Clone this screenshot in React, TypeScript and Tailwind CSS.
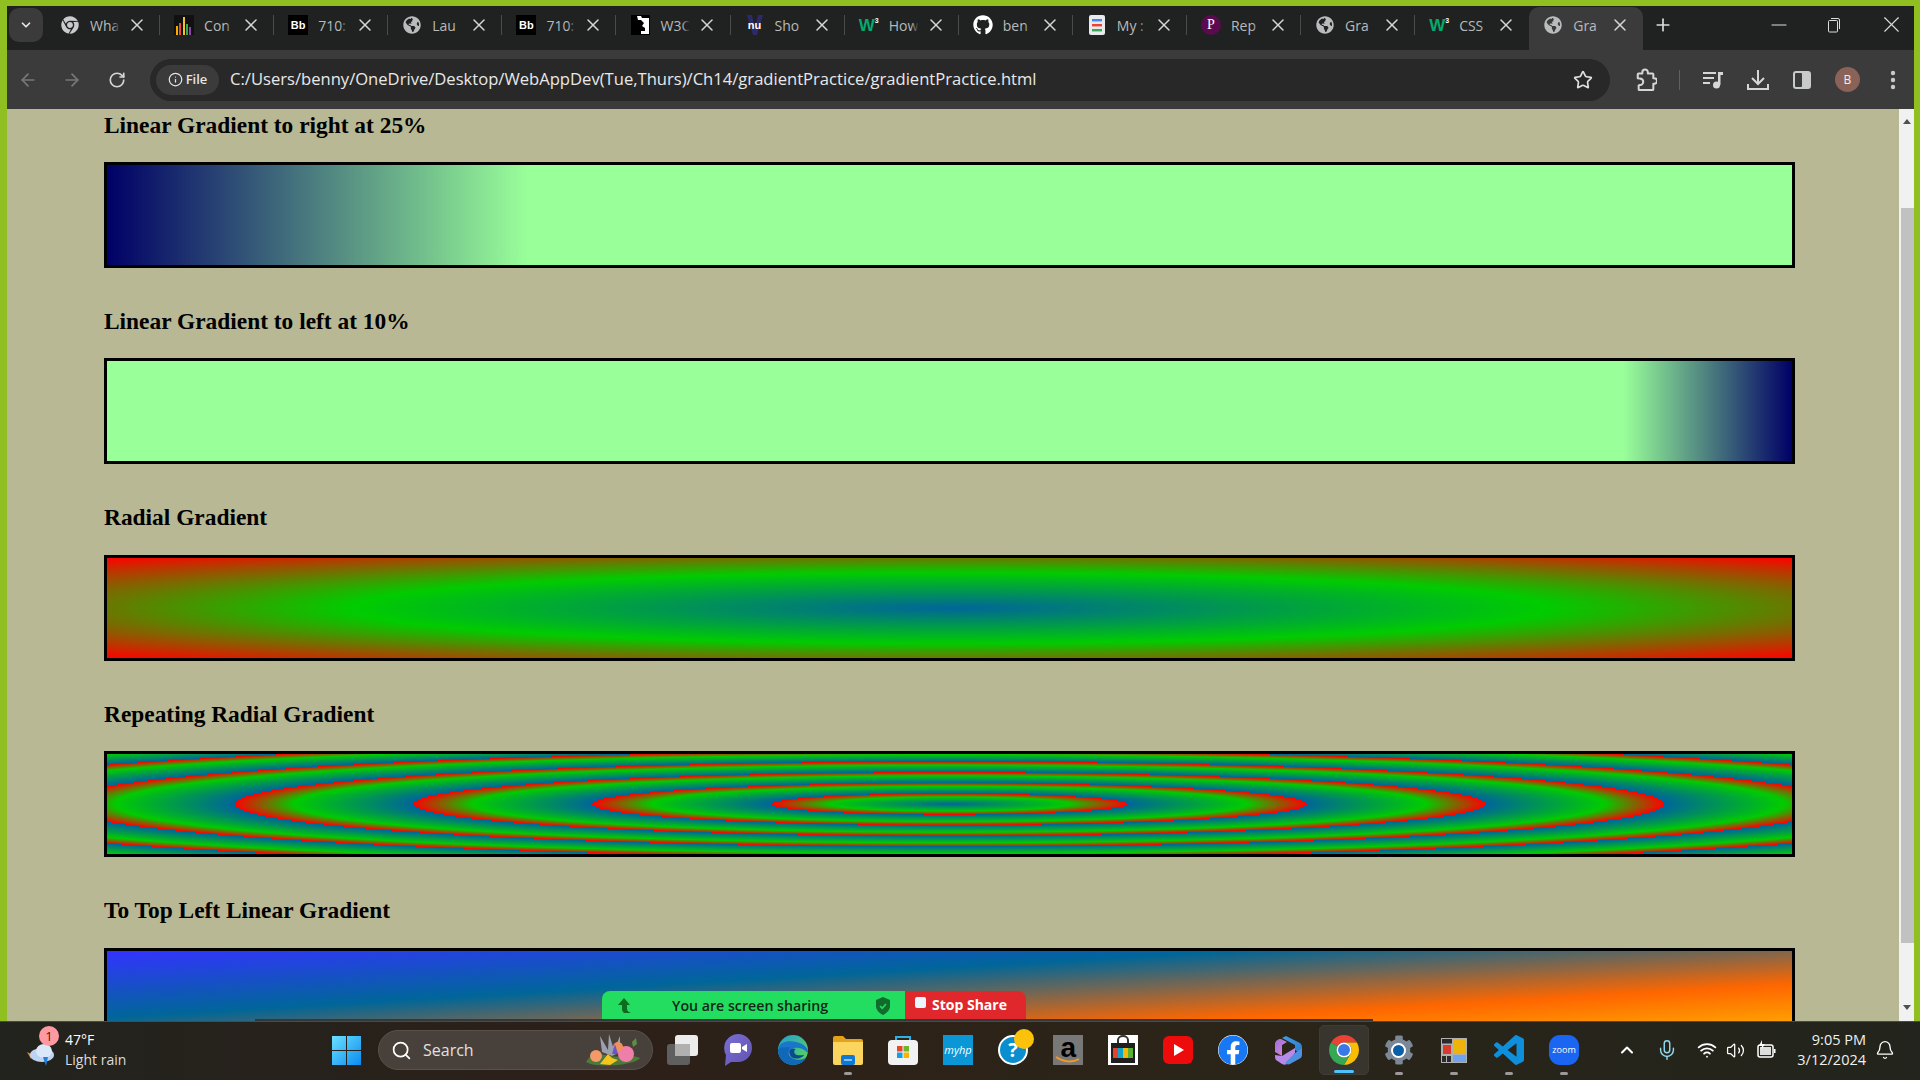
import React from 'react';
import { ArrowLeft, ArrowRight, RotateCw, Star, Plus, X, Minus, ChevronDown, ChevronUp, Search, Mic, Wifi, Volume2, Bell, Info } from 'lucide-react';
import { FaGlobeAmericas, FaGithub, FaFacebook, FaCog, FaChrome } from 'react-icons/fa';

const ChromeLogo = ({ size = 36 }: { size?: number }) => (
    <svg width={size} height={size} viewBox="4 4 40 40">
        <path fill="#ea4335" d="M24 4a20 20 0 0 1 17.32 10H24a10 10 0 0 0-8.66 5L6.68 14A20 20 0 0 1 24 4z" />
        <path fill="#fbbc04" d="M41.32 14A20 20 0 0 1 24 44l8.66-15A10 10 0 0 0 24 14z" />
        <path fill="#34a853" d="M6.68 14A20 20 0 0 0 24 44l8.66-15a10 10 0 0 1-17.32-10z" />
        <circle cx="24" cy="24" r="10" fill="#fff" />
        <circle cx="24" cy="24" r="8" fill="#3b78e7" />
    </svg>
);

const Globe = () => <FaGlobeAmericas className="text-[#b9bcbd] text-[18px]" />;

function BbIcon() {
    return (
        <span className="flex h-5 w-5 items-center justify-center bg-black text-[11px] font-bold leading-none text-white font-['Liberation_Sans',sans-serif]">Bb</span>
    );
}

function W3Icon() {
    return (
        <span className="flex w-5 items-start justify-center text-[17px] font-bold leading-none text-[#04aa6d] font-['Liberation_Sans',sans-serif]">
            W<span className="text-[7px] leading-none text-white">3</span>
        </span>
    );
}

const tabs: { label: string; icon: React.ReactNode }[] = [
    { label: 'Wha', icon: <FaChrome className="text-[#c9cbcc] text-[18px]" /> },
    {
        label: 'Con',
        icon: (
            <svg width="20" height="20" viewBox="0 0 20 20">
                <rect width="20" height="20" fill="#111" />
                <rect x="2" y="11" width="2" height="9" fill="#f9ab00" />
                <rect x="5" y="8" width="2" height="12" fill="#e8453c" />
                <rect x="9" y="2" width="2" height="18" fill="#f6c026" />
                <rect x="12" y="9" width="2" height="11" fill="#34a853" />
                <rect x="15" y="12" width="2" height="8" fill="#8e44ad" />
            </svg>
        ),
    },
    { label: '710:', icon: <BbIcon /> },
    { label: 'Lau', icon: <Globe /> },
    { label: '710:', icon: <BbIcon /> },
    {
        label: 'W3C',
        icon: (
            <svg width="19" height="20" viewBox="0 0 19 20">
                <rect width="19" height="20" fill="#000" />
                <path d="M6 1h4l1 2h7v16h-8v-3h4v-3l-3-2 2-3-3-3H7z" fill="#fff" />
            </svg>
        ),
    },
    {
        label: 'Sho',
        icon: (
            <span className="relative flex h-5 w-5 items-center justify-center">
                <svg width="20" height="20" viewBox="0 0 20 20" className="absolute inset-0">
                    <path d="M2 0h5l3 14 3-14h5l-6 20h-4z" fill="#2c2a6b" />
                </svg>
                <span className="relative text-[11px] font-bold leading-none text-white font-['Liberation_Sans',sans-serif]">nu</span>
            </span>
        ),
    },
    { label: 'How', icon: <W3Icon /> },
    { label: 'ben', icon: <FaGithub className="text-white text-[20px]" /> },
    {
        label: 'My :',
        icon: (
            <svg width="16" height="20" viewBox="0 0 16 20">
                <rect width="16" height="20" rx="2" fill="#e8eaed" />
                <rect x="3" y="4" width="10" height="2.4" fill="#4285f4" />
                <rect x="3" y="9" width="10" height="2.4" fill="#ea4335" />
                <rect x="3" y="14" width="10" height="2.4" fill="#34a853" />
            </svg>
        ),
    },
    {
        label: 'Rep',
        icon: (
            <span className="flex h-5 w-5 items-center justify-center rounded-full bg-[#5b0a4f] text-[14px] leading-none text-white font-['Liberation_Serif',serif]">P</span>
        ),
    },
    { label: 'Gra', icon: <Globe /> },
    { label: 'CSS', icon: <W3Icon /> },
    { label: 'Gra', icon: <Globe /> },
];

const Tab = ({ label, icon, active, last }: { label: string; icon: React.ReactNode; active: boolean; last: boolean }) => (
    <div className={`relative flex h-[43px] w-[114.1px] shrink-0 items-center pb-[7px] pl-[14px] ${active ? 'rounded-t-[10px] bg-[#3b3b3b]' : ''}`}>
        <span className="flex w-5 shrink-0 items-center justify-center">{icon}</span>
        <span className="relative ml-[10px] w-[30px] overflow-hidden whitespace-nowrap text-[14px] text-[#b8baba]">
            {label}
            <span className={`absolute inset-y-0 right-0 w-2 ${active ? 'bg-gradient-to-r from-transparent to-[#3b3b3b]' : 'bg-gradient-to-r from-transparent to-[#202221]'}`} />
        </span>
        <X size={20} strokeWidth={1.8} className="ml-[7px] shrink-0 text-[#d5d6d6]" />
        {!active && !last && <span className="absolute right-0 top-[8px] h-[20px] w-px bg-[#4a4c4c]" />}
    </div>
);

const headingClass = "mb-[24.5px] text-[23.4px] font-bold leading-[25px] text-black font-['Liberation_Serif',serif]";
const boxClass = 'mb-[40.9px] h-[106px] w-full shrink-0 border-[3px] border-black';

const sections = [
    { title: 'Linear Gradient to right at 25%', bg: 'bg-[linear-gradient(to_right,#000066,#99ff99_25%)]' },
    { title: 'Linear Gradient to left at 10%', bg: 'bg-[linear-gradient(to_left,#000066,#99ff99_10%)]' },
    { title: 'Radial Gradient', bg: 'bg-[radial-gradient(#006699,#00cc00,#ff0000)]' },
    { title: 'Repeating Radial Gradient', bg: 'bg-[repeating-radial-gradient(#006699,#00cc00_10%,#ff0000_15%)]' },
    { title: 'To Top Left Linear Gradient', bg: 'bg-[linear-gradient(to_top_left,#ffcc00,#ff6600,#006699,#3333ff)]' },
];

const Slot = ({ children, dot, active }: { children: React.ReactNode; dot?: boolean; active?: boolean }) => (
    <div className={`relative mx-[2.55px] flex h-[50px] w-[50px] items-center justify-center rounded-[5px] ${active ? 'border border-[#3f3b35] bg-[#38352f]' : ''}`}>
        {children}
        {active && <span className="absolute bottom-[1px] h-[3px] w-5 rounded-full bg-[#4cc2ff]" />}
        {dot && <span className="absolute bottom-0 h-[3px] w-2 rounded-full bg-[#9a9a98]" />}
    </div>
);

export default function App() {
    return (
        <div className="relative flex h-screen w-screen flex-col overflow-hidden bg-[#8fbf21] font-['Open_Sans',sans-serif]">
            <div className="flex h-[1021px] shrink-0 flex-col pl-[7px] pr-[6px] pt-[6px]">
                {/* tab strip */}
                <div className="flex h-[44px] shrink-0 items-end bg-[#202221]">
                    <div className="mb-[8px] ml-[2px] mr-[3px] flex h-[34px] w-[34px] shrink-0 items-center justify-center rounded-[10px] bg-[#3b3b3b]">
                        <ChevronDown size={14} strokeWidth={3} className="text-[#e5e5e5]" />
                    </div>
                    {tabs.map((t, i) => (
                        <Tab key={i} label={t.label} icon={t.icon} active={i === tabs.length - 1} last={i === tabs.length - 2} />
                    ))}
                    <div className="mb-[15px] ml-[10px] flex h-5 w-5 items-center justify-center">
                        <Plus size={20} strokeWidth={2} className="text-[#dcdcdc]" />
                    </div>
                    <div className="mb-[12px] ml-auto flex items-center pr-[9.5px] text-[#dcdcdc]">
                        <Minus size={24} strokeWidth={1.2} />
                        <svg width="14" height="16" viewBox="0 0 14 16" className="ml-[36px]" fill="none" stroke="currentColor">
                            <rect x="1.5" y="3.5" width="9" height="11.5" rx="1" />
                            <path d="M4 1.5h7a1.5 1.5 0 0 1 1.5 1.5v9" />
                        </svg>
                        <X size={27} strokeWidth={1} className="ml-[36.5px]" />
                    </div>
                </div>
                {/* toolbar */}
                <div className="flex h-[59px] shrink-0 items-center bg-[#3b3b3b]">
                    <ArrowLeft size={20} strokeWidth={2} className="ml-[11px] text-[#77797a]" />
                    <ArrowRight size={20} strokeWidth={2} className="ml-[24px] text-[#77797a]" />
                    <RotateCw size={18} strokeWidth={2.2} className="ml-[26px] text-[#d5d6d6]" />
                    <div className="ml-[24px] flex h-[42px] w-[1460px] shrink-0 items-center rounded-full bg-[#282828] pl-[6px]">
                        <div className="flex h-[30px] w-[63px] items-center justify-center gap-[3px] rounded-full bg-[#3b3b3b] text-[13px] font-semibold text-[#e5e5e5]">
                            <Info size={15} strokeWidth={2} />
                            File
                        </div>
                        <span className="ml-[11px] whitespace-nowrap text-[16.6px] text-[#e8e8e8]">C:/Users/benny/OneDrive/Desktop/WebAppDev(Tue,Thurs)/Ch14/gradientPractice/gradientPractice.html</span>
                        <Star size={20} strokeWidth={2} className="ml-auto mr-[17px] text-[#e0e0e0]" />
                    </div>
                    <svg width="22" height="24" viewBox="0 0 24 26" fill="none" stroke="#d5d6d6" strokeWidth="2.2" strokeLinejoin="round" className="ml-[25px] shrink-0">
                        <path d="M8 6V4.5a3 3 0 0 1 6 0V6h5a1 1 0 0 1 1 1v4h1a3 3 0 0 1 0 6h-1v6a1 1 0 0 1-1 1H5a1 1 0 0 1-1-1v-4l1.5-.5a3.5 3.5 0 0 0 0-7L3 11V7a1 1 0 0 1 1-1z" />
                    </svg>
                    <span className="ml-[22px] h-[20px] w-px shrink-0 bg-[#5f5f5f]" />
                    <svg width="20" height="18" viewBox="0 0 20 18" className="ml-[23px] shrink-0" fill="#d5d6d6">
                        <rect x="0" y="1" width="13" height="2" />
                        <rect x="0" y="6" width="11" height="2" />
                        <rect x="0" y="11" width="7" height="2" />
                        <path d="M15 1h5v3h-2.5v10h-2.5z" />
                        <circle cx="13.5" cy="14" r="3.5" />
                    </svg>
                    <svg width="22" height="22" viewBox="0 0 22 22" className="ml-[24px] shrink-0" fill="none" stroke="#d5d6d6" strokeWidth="2">
                        <path d="M11 1v13 M5 9l6 6 6-6 M1 15v5h20v-5" />
                    </svg>
                    <svg width="18" height="18" viewBox="0 0 18 18" className="ml-[24px] shrink-0">
                        <rect width="18" height="18" rx="3" fill="#c9caca" />
                        <rect x="2" y="2" width="7" height="14" rx="1" fill="#3b3b3b" />
                    </svg>
                    <span className="ml-[24px] flex h-[25px] w-[25px] shrink-0 items-center justify-center rounded-full bg-[#8a6358] text-[12px] text-[#eee]">B</span>
                    <svg width="6" height="20" viewBox="0 0 6 20" className="ml-[30px] shrink-0" fill="#c9caca">
                        <circle cx="3" cy="3" r="2.2" />
                        <circle cx="3" cy="10" r="2.2" />
                        <circle cx="3" cy="17" r="2.2" />
                    </svg>
                </div>
                {/* page */}
                <div className="flex min-h-0 flex-1">
                    <div className="min-w-0 flex-1 overflow-hidden bg-[#b8b894] pl-[97px] pr-[104px] pt-[3.5px]">
                        {sections.map((s) => (
                            <div key={s.title}>
                                <h3 className={headingClass}>{s.title}</h3>
                                <div className={`${boxClass} ${s.bg}`} />
                            </div>
                        ))}
                    </div>
                    <div className="flex w-[15px] shrink-0 flex-col bg-[#f1f1f1] pt-[10px]">
                        <span className="mx-auto h-0 w-0 border-x-[4px] border-b-[5px] border-x-transparent border-b-[#505050]" />
                        <span className="ml-[2px] mt-[84px] h-[735px] w-[13px] bg-[#c1c1c1]" />
                        <span className="mx-auto mt-[62px] h-0 w-0 border-x-[4px] border-t-[5px] border-x-transparent border-t-[#505050]" />
                    </div>
                </div>
            </div>

            {/* zoom share bar */}
            <div className="absolute left-[602px] top-[991px] flex h-[30px] items-stretch">
                <div className="flex w-[303px] items-center rounded-tl-[8px] bg-[#22dd5f] pb-[1px] pl-[16px] text-[14.2px] font-semibold text-[#12261a]">
                    <svg width="14" height="16" viewBox="0 0 14 16">
                        <path fill="#0c6b1f" d="M6 0l6 7H9v4c0 2 2 3 4 4H6c-1-1-2-2-2-4V7H0z" />
                    </svg>
                    <span className="ml-[40px] w-[158px] whitespace-nowrap">You are screen sharing</span>
                    <svg width="14" height="18" viewBox="0 0 14 18" className="ml-[46px]">
                        <path fill="#116b2c" d="M7 0l7 3v6c0 4-3 7-7 9-4-2-7-5-7-9V3z" />
                        <path d="M4 9l2.2 2.3L10 7" fill="none" stroke="#22dd5f" strokeWidth="1.6" />
                    </svg>
                </div>
                <div className="flex w-[121px] items-start rounded-tr-[8px] bg-[#e0282c] pl-[10px] text-[14px] font-bold text-white">
                    <span className="mt-[6px] h-[11px] w-[11px] rounded-[2px] bg-[#eaf6fb]" />
                    <span className="ml-[6px] mt-[4px] whitespace-nowrap leading-[20px]">Stop Share</span>
                </div>
            </div>
            <span className="absolute left-[255px] top-[1019px] h-[2px] w-[1118px] bg-[#33393a]" />

            {/* taskbar */}
            <div className="flex h-[59px] shrink-0 items-center border-t border-[#4a4a48] bg-[linear-gradient(to_right,#22231e,#2c2019_30%,#2c2418_60%,#22241d)] pb-[2px] text-white">
                <div className="relative ml-[27px] flex w-[305px] shrink-0 items-center">
                    <svg width="30" height="28" viewBox="0 0 30 28" className="mt-[6px]">
                        <path d="M0 13l6 3-2 4z" fill="#f08c1e" />
                        <ellipse cx="15" cy="16" rx="12" ry="7" fill="#bcd4f2" />
                        <ellipse cx="17" cy="12" rx="8" ry="7" fill="#dbe8f8" />
                        <path d="M16 18h5l-2 9z" fill="#1e7fe0" />
                    </svg>
                    <span className="absolute left-[12px] top-[-4px] flex h-5 w-5 items-center justify-center rounded-full bg-[#ff9aa2] text-[13px] leading-none text-[#3a1a1a]">1</span>
                    <div className="ml-[8px] text-[14px] leading-[20px]">
                        <div>47°F</div>
                        <div className="text-[#dcdcdc]">Light rain</div>
                    </div>
                </div>
                <svg width="29" height="29" viewBox="0 0 29 29" className="shrink-0">
                    <defs>
                        <linearGradient id="win" x1="0" y1="0" x2="1" y2="1">
                            <stop offset="0" stopColor="#6ae0ff" />
                            <stop offset="1" stopColor="#0a8cf0" />
                        </linearGradient>
                    </defs>
                    <path fill="url(#win)" d="M0 0h14v14H0z M15 0h14v14H15z M0 15h14v14H0z M15 15h14v14H15z" />
                </svg>
                <div className="ml-[17px] flex h-10 w-[275px] shrink-0 items-center rounded-full border border-[#5a524a] bg-[#48403a] pl-[12px] text-[16px] text-[#e0e0e0]">
                    <Search size={21} strokeWidth={2} className="text-white" />
                    <span className="ml-[11px]">Search</span>
                    <svg width="62" height="36" viewBox="0 0 62 36" className="ml-auto mr-[8px]">
                        <path d="M4 30c8-12 12-8 24-6s24-2 30 2c-6 8-46 10-54 4z" fill="#4c7a3a" />
                        <path d="M18 4l8 14 1-16 5 16 6-14 0 16-8 4-10-4z" fill="#9c9fb0" />
                        <circle cx="14" cy="24" r="6" fill="#f39a6b" />
                        <circle cx="44" cy="22" r="8" fill="#ef7fa8" />
                        <circle cx="36" cy="15" r="5" fill="#f0905e" />
                        <path d="M18 32l8-10 4 4 6 2-8 5z" fill="#f5c41e" />
                        <path d="M30 22l3-10 3 10z" fill="#6b54c8" />
                        <path d="M50 10l4-4 1 6-4 3z" fill="#5f8d46" />
                    </svg>
                </div>
                <div className="ml-[2px] flex items-center">
                    <Slot>
                        <svg width="31" height="30" viewBox="0 0 31 30">
                            <rect x="0" y="9" width="23" height="21" rx="3" fill="#5f5f5f" />
                            <rect x="8" y="0" width="23" height="21" rx="3" fill="#ececec" />
                            <rect x="8" y="9" width="15" height="12" fill="#b0b0b0" />
                        </svg>
                    </Slot>
                    <Slot>
                        <svg width="30" height="32" viewBox="0 0 30 32">
                            <defs>
                                <linearGradient id="meet" x1="0" y1="0" x2="1" y2="1">
                                    <stop offset="0" stopColor="#7b6fd6" />
                                    <stop offset="1" stopColor="#5f52b0" />
                                </linearGradient>
                            </defs>
                            <path d="M15 0a14 14 0 0 1 0 28H8l-6 4 1-11A14 14 0 0 1 15 0z" fill="url(#meet)" />
                            <rect x="7" y="9" width="11" height="10" rx="2" fill="#fff" />
                            <path d="M19 13l5-3v8l-5-3z" fill="#fff" />
                        </svg>
                    </Slot>
                    <Slot>
                        <svg width="30" height="30" viewBox="0 0 32 32">
                            <defs>
                                <linearGradient id="edge" x1="0" y1="0" x2="1" y2="1">
                                    <stop offset="0" stopColor="#1f9fd8" />
                                    <stop offset="1" stopColor="#62d84a" />
                                </linearGradient>
                            </defs>
                            <circle cx="16" cy="16" r="16" fill="url(#edge)" />
                            <path d="M1 14C2 26 14 34 24 30c-8 1-14-4-13-10 1-6 10-9 17-4 3 2 4 4 4 1C30 6 2 2 1 14z" fill="#1976c8" />
                            <path d="M0 16c0 9 7 16 16 16 6 0 12-3 14-8-5 3-10 3-14 1-6-3-6-9-3-12-6 0-13 0-13 3z" fill="#1167b8" />
                            <path d="M12 18c0 5 5 8 10 7 3-1 5-2 6-4-4 1-8 1-10-1-1-2-1-4 1-5-4-1-7 0-7 3z" fill="#0b4a90" />
                        </svg>
                    </Slot>
                    <Slot dot>
                        <svg width="30" height="30" viewBox="0 0 30 30">
                            <path d="M0 3a2 2 0 0 1 2-2h8l3 3h15a2 2 0 0 1 2 2v3H0z" fill="#e3a21a" />
                            <path d="M0 7h30v21a2 2 0 0 1-2 2H2a2 2 0 0 1-2-2z" fill="#fcd55f" />
                            <rect x="8" y="20" width="14" height="10" rx="2" fill="#0f78d4" />
                            <rect x="11" y="24" width="8" height="2" fill="#7fc4f4" />
                        </svg>
                    </Slot>
                    <Slot>
                        <svg width="30" height="30" viewBox="0 0 30 30">
                            <path d="M8 7V2h14v5" fill="none" stroke="#2bb0e8" strokeWidth="2" />
                            <rect y="5" width="30" height="25" rx="4" fill="#f2f2f2" />
                            <rect x="9" y="11" width="5.5" height="5.5" fill="#e8452c" />
                            <rect x="15.5" y="11" width="5.5" height="5.5" fill="#6cb52d" />
                            <rect x="9" y="17.5" width="5.5" height="5.5" fill="#10a0e8" />
                            <rect x="15.5" y="17.5" width="5.5" height="5.5" fill="#f7b500" />
                        </svg>
                    </Slot>
                    <Slot>
                        <span className="flex h-[30px] w-[30px] items-center justify-center bg-[#0b96d6] text-[11px] italic text-white">myhp</span>
                    </Slot>
                    <Slot>
                        <span className="flex h-[30px] w-[30px] items-center justify-center rounded-full border-2 border-white bg-[#0b8ed0] text-[20px] font-bold leading-none text-white">?</span>
                        <span className="absolute right-[4px] top-[4px] h-5 w-5 rounded-full bg-[#fcc10a]" />
                    </Slot>
                    <Slot>
                        <span className="relative flex h-[30px] w-[30px] items-center justify-center bg-[#787878] pb-[4px] text-[28px] font-bold leading-none text-black font-['Liberation_Sans',sans-serif]">
                            a
                            <svg width="26" height="8" viewBox="0 0 26 8" className="absolute bottom-[1px] left-[2px]">
                                <path d="M1 1c7 5 16 6 23 2" fill="none" stroke="#f39a1e" strokeWidth="2" />
                            </svg>
                        </span>
                    </Slot>
                    <Slot>
                        <svg width="30" height="30" viewBox="0 0 30 30">
                            <rect width="30" height="30" fill="#fff" />
                            <path d="M10 9V5a5 4 0 0 1 10 0v4" fill="none" stroke="#333" strokeWidth="2" />
                            <path d="M3 8h24v20H3z" fill="#1f1f1f" />
                            <rect x="5" y="13" width="5" height="10" fill="#e8412c" />
                            <rect x="10" y="13" width="5" height="10" fill="#12a5c8" />
                            <rect x="15" y="13" width="5" height="10" fill="#f5b70b" />
                            <rect x="20" y="13" width="5" height="10" fill="#5ab031" />
                        </svg>
                    </Slot>
                    <Slot>
                        <svg width="30" height="28" viewBox="0 0 30 28">
                            <rect width="30" height="28" rx="6" fill="#ee0b0b" />
                            <path d="M11 8l10 6-10 6z" fill="#fff" />
                        </svg>
                    </Slot>
                    <Slot>
                        <span className="flex h-[30px] w-[30px] items-center justify-center overflow-hidden rounded-full bg-white">
                            <FaFacebook className="text-[30px] text-[#1877f2]" />
                        </span>
                    </Slot>
                    <Slot>
                        <svg width="27" height="30" viewBox="0 0 27 30">
                            <defs>
                                <linearGradient id="cop" x1="0" y1="0" x2="1" y2="1">
                                    <stop offset="0" stopColor="#3f9ee8" />
                                    <stop offset="1" stopColor="#2c7ac8" />
                                </linearGradient>
                                <linearGradient id="cop2" x1="0" y1="0" x2="1" y2="1">
                                    <stop offset="0" stopColor="#9b6fe0" />
                                    <stop offset="1" stopColor="#d98ad0" />
                                </linearGradient>
                            </defs>
                            <path d="M11 1l14 7c1 1 2 2 2 4v8l-7-5v-5L7 3z" fill="url(#cop)" />
                            <path d="M0 9c0-3 3-5 6-5l6 3-5 3v11l-7-4z" fill="url(#cop2)" />
                            <path d="M7 21l13-8v5l-8 11c-2 1-3 1-5 0l-6-4c-1-1-1-3-1-5z" fill="#b58ae8" />
                            <path d="M20 18l7-5v7c0 2-1 3-3 4l-9 5c-2 1-4 0-5-1z" fill="#4f8fe0" />
                        </svg>
                    </Slot>
                    <Slot active>
                        <ChromeLogo size={30} />
                    </Slot>
                    <Slot dot>
                        <span className="relative flex h-[30px] w-[30px] items-center justify-center">
                            <FaCog className="text-[30px] text-[#7c8896]" />
                            <span className="absolute h-[15px] w-[15px] rounded-full border-2 border-white bg-[#0a5fa8]" />
                        </span>
                    </Slot>
                    <Slot dot>
                        <svg width="26" height="25" viewBox="0 0 26 25">
                            <rect width="26" height="25" fill="#b0b0ae" />
                            <rect x="12" y="1" width="13" height="14" fill="#efb30a" />
                            <rect x="12" y="17" width="13" height="7" fill="#6ea3f0" />
                            <rect x="2" y="7" width="8" height="9" fill="#d93a2b" />
                            <rect x="1" y="1" width="10" height="4.5" fill="#2b2b2b" />
                            <rect x="1" y="18" width="4" height="6" fill="#2b2b2b" />
                            <rect x="6" y="18" width="4" height="6" fill="#2b2b2b" />
                        </svg>
                    </Slot>
                    <Slot dot>
                        <svg width="30" height="30" viewBox="0 0 24 24">
                            <path fill="#0e8fdc" d="M23.15 2.587L18.21.21a1.494 1.494 0 0 0-1.705.29l-9.46 8.63-4.12-3.128a.999.999 0 0 0-1.276.057L.327 7.261A1 1 0 0 0 .326 8.74L3.899 12 .326 15.26a1 1 0 0 0 .001 1.479L1.65 17.94a.999.999 0 0 0 1.276.057l4.12-3.128 9.46 8.63a1.492 1.492 0 0 0 1.704.29l4.942-2.377A1.5 1.5 0 0 0 24 20.06V3.939a1.5 1.5 0 0 0-.85-1.352zm-5.146 14.861L10.826 12l7.178-5.448v10.896z" />
                        </svg>
                    </Slot>
                    <Slot dot>
                        <span className="flex h-[30px] w-[30px] items-center justify-center rounded-[11px] bg-[#1a66f2] text-[9px] text-white">zoom</span>
                    </Slot>
                </div>
                <div className="ml-auto flex items-center pr-[25px]">
                    <ChevronUp size={20} strokeWidth={2.5} className="text-white" />
                    <Mic size={22} strokeWidth={1.6} className="ml-[19px] text-[#8fd8ee]" />
                    <Wifi size={20} strokeWidth={2.2} className="ml-[19px] text-white" />
                    <Volume2 size={19} strokeWidth={1.6} className="ml-[9px] text-white" />
                    <svg width="20" height="20" viewBox="0 0 20 20" className="ml-[11px]">
                        <rect x="2" y="5" width="15" height="12" rx="2" fill="none" stroke="#fff" strokeWidth="1.5" />
                        <rect x="4" y="7" width="11" height="8" fill="#ddd" />
                        <rect x="18" y="9" width="1.5" height="4" fill="#fff" />
                        <path d="M6 0L3 6h3l-1 4 4-6H6z" fill="#fff" />
                    </svg>
                    <div className="w-[90px] text-right text-[14.5px] leading-[20px] text-[#f0f0f0]">
                        <div>9:05 PM</div>
                        <div>3/12/2024</div>
                    </div>
                    <Bell size={20} strokeWidth={1.6} className="ml-[9px] text-white" />
                </div>
            </div>
        </div>
    );
}
